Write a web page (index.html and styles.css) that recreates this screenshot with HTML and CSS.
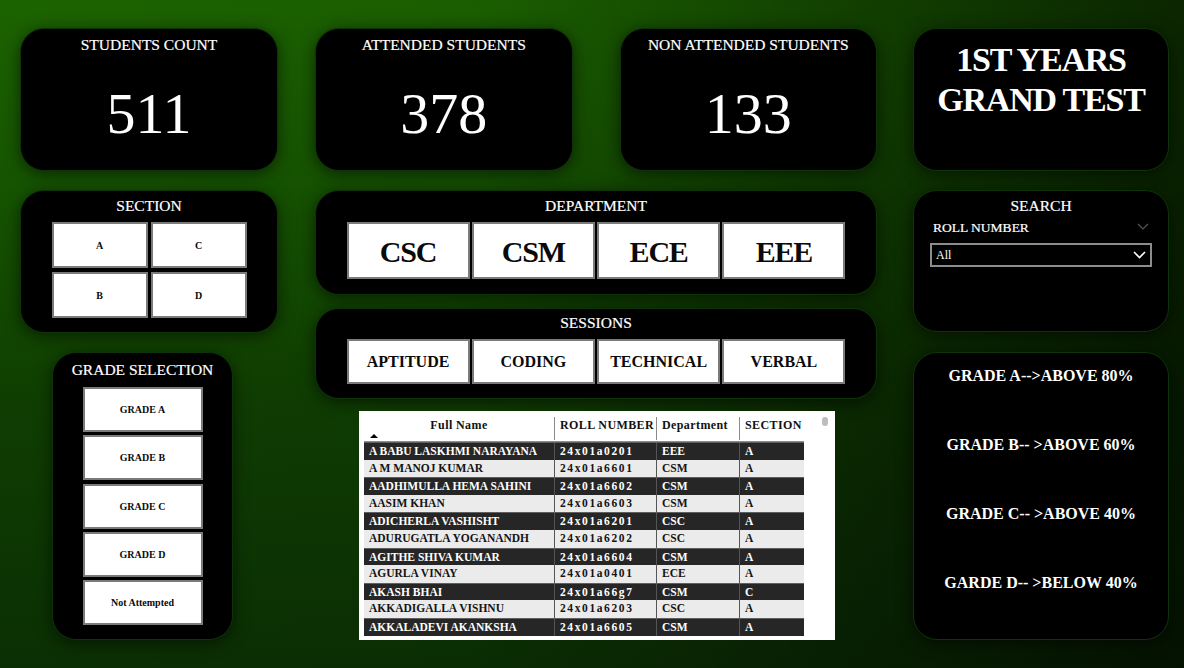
FILE: index.html
```html
<!DOCTYPE html>
<html lang="en">
<head>
<meta charset="utf-8">
<title>1st Years Grand Test</title>
<link rel="stylesheet" href="styles.css">
</head>
<body>
<div class="dash">
  <div class="col col1">
    <div class="card kpi">
      <div class="kpi-label">STUDENTS COUNT</div>
      <div class="kpi-value">511</div>
    </div>
    <div class="card section-card">
      <div class="card-title">SECTION</div>
      <div class="sec-grid">
        <div class="btn btn-sm">A</div>
        <div class="btn btn-sm">C</div>
        <div class="btn btn-sm">B</div>
        <div class="btn btn-sm">D</div>
      </div>
    </div>
    <div class="card grade-card">
      <div class="card-title">GRADE SELECTION</div>
      <div class="grade-list">
        <div class="btn btn-sm">GRADE A</div>
        <div class="btn btn-sm">GRADE B</div>
        <div class="btn btn-sm">GRADE C</div>
        <div class="btn btn-sm">GRADE D</div>
        <div class="btn btn-sm">Not Attempted</div>
      </div>
    </div>
  </div>

  <div class="col col2">
    <div class="kpi-row">
      <div class="card kpi">
        <div class="kpi-label">ATTENDED STUDENTS</div>
        <div class="kpi-value">378</div>
      </div>
      <div class="card kpi">
        <div class="kpi-label">NON ATTENDED STUDENTS</div>
        <div class="kpi-value">133</div>
      </div>
    </div>
    <div class="card dept-card">
      <div class="card-title">DEPARTMENT</div>
      <div class="btn-row dept-row">
        <div class="btn btn-xl">CSC</div>
        <div class="btn btn-xl">CSM</div>
        <div class="btn btn-xl">ECE</div>
        <div class="btn btn-xl">EEE</div>
      </div>
    </div>
    <div class="card sess-card">
      <div class="card-title">SESSIONS</div>
      <div class="btn-row sess-row">
        <div class="btn btn-md">APTITUDE</div>
        <div class="btn btn-md">CODING</div>
        <div class="btn btn-md">TECHNICAL</div>
        <div class="btn btn-md">VERBAL</div>
      </div>
    </div>
    <div class="table-panel">
      <div class="thead">
        <div class="th th-name">Full Name<span class="sort-arrow"></span></div>
        <div class="th">ROLL NUMBER</div>
        <div class="th">Department</div>
        <div class="th">SECTION</div>
      </div>
      <div class="tbody">
        <div class="tr dark"><div class="td">A BABU LASKHMI NARAYANA</div><div class="td roll">24x01a0201</div><div class="td">EEE</div><div class="td">A</div></div>
        <div class="tr light"><div class="td">A M MANOJ KUMAR</div><div class="td roll">24x01a6601</div><div class="td">CSM</div><div class="td">A</div></div>
        <div class="tr dark"><div class="td">AADHIMULLA HEMA SAHINI</div><div class="td roll">24x01a6602</div><div class="td">CSM</div><div class="td">A</div></div>
        <div class="tr light"><div class="td">AASIM KHAN</div><div class="td roll">24x01a6603</div><div class="td">CSM</div><div class="td">A</div></div>
        <div class="tr dark"><div class="td">ADICHERLA VASHISHT</div><div class="td roll">24x01a6201</div><div class="td">CSC</div><div class="td">A</div></div>
        <div class="tr light"><div class="td">ADURUGATLA YOGANANDH</div><div class="td roll">24x01a6202</div><div class="td">CSC</div><div class="td">A</div></div>
        <div class="tr dark"><div class="td">AGITHE SHIVA KUMAR</div><div class="td roll">24x01a6604</div><div class="td">CSM</div><div class="td">A</div></div>
        <div class="tr light"><div class="td">AGURLA VINAY</div><div class="td roll">24x01a0401</div><div class="td">ECE</div><div class="td">A</div></div>
        <div class="tr dark"><div class="td">AKASH BHAI</div><div class="td roll">24x01a66g7</div><div class="td">CSM</div><div class="td">C</div></div>
        <div class="tr light"><div class="td">AKKADIGALLA VISHNU</div><div class="td roll">24x01a6203</div><div class="td">CSC</div><div class="td">A</div></div>
        <div class="tr dark"><div class="td">AKKALADEVI AKANKSHA</div><div class="td roll">24x01a6605</div><div class="td">CSM</div><div class="td">A</div></div>
      </div>
      <div class="scroll-thumb"></div>
    </div>
  </div>

  <div class="col col3">
    <div class="card title-card">
      <div class="big-title">1ST YEARS<br>GRAND TEST</div>
    </div>
    <div class="card search-card">
      <div class="card-title">SEARCH</div>
      <div class="field-row">
        <span class="field-label">ROLL NUMBER</span>
        <svg class="chev-top" width="12" height="7" viewBox="0 0 12 7"><path d="M1 1 L6 6 L11 1" fill="none" stroke="#555" stroke-width="1.2"/></svg>
      </div>
      <div class="dropdown">
        <span class="dd-value">All</span>
        <svg class="chev" width="13" height="8" viewBox="0 0 13 8"><path d="M1 1 L6.5 6.5 L12 1" fill="none" stroke="#fff" stroke-width="1.6"/></svg>
      </div>
    </div>
    <div class="card legend-card">
      <div class="legend-line">GRADE A--&gt;ABOVE 80%</div>
      <div class="legend-line">GRADE B-- &gt;ABOVE 60%</div>
      <div class="legend-line">GRADE C-- &gt;ABOVE 40%</div>
      <div class="legend-line">GARDE D-- &gt;BELOW 40%</div>
    </div>
  </div>
</div>
</body>
</html>
```

FILE: styles.css
```css
* { box-sizing: border-box; margin: 0; padding: 0; }

html, body { width: 1184px; height: 668px; overflow: hidden; }

body {
  font-family: "Liberation Serif", "Times New Roman", serif;
  color: #fff;
  background:
    linear-gradient(90deg, rgba(0,0,0,0) 0%, rgba(0,0,0,0.05) 40%, rgba(0,0,0,0.62) 100%),
    linear-gradient(180deg, #1c6300 0%, #175600 25%, #0f3e02 60%, #0b2f04 100%);
}

.dash { display: flex; padding: 28px 0 0 20px; height: 100%; }

.col { display: flex; flex-direction: column; }
.col1 { width: 258px; }
.col2 { width: 562px; margin-left: 37px; }
.col3 { width: 256px; margin-left: 36px; }

.card {
  background: #000;
  border-radius: 24px;
  border: 1px solid #0f3309;
  box-shadow: 0 3px 16px rgba(0,0,0,0.55);
}

.card-title { font-size: 15.5px; line-height: 18px; text-align: center; -webkit-text-stroke: 0.2px #fff; }

/* KPI cards */
.kpi { height: 143px; display: flex; flex-direction: column; align-items: center; padding-top: 7px; }
.kpi-label { font-size: 15.5px; line-height: 18px; white-space: nowrap; -webkit-text-stroke: 0.2px #fff; }
.kpi-value { font-size: 58px; line-height: 60px; margin-top: 30px; }
.kpi-row { display: flex; gap: 47px; }
.kpi-row .kpi { flex: 1; }

/* buttons */
.btn {
  background: #fff;
  color: #0a0a0a;
  border: 2px solid #7b7b7b;
  font-weight: bold;
  display: flex; align-items: center; justify-content: center;
  white-space: nowrap;
}
.btn-sm { font-size: 10px; }
.btn-md { font-size: 16px; }
.btn-xl { font-size: 30px; letter-spacing: -1.2px; padding-top: 2px; }

/* section */
.section-card { height: 143px; margin-top: 19px; padding-top: 6px; }
.sec-grid {
  display: grid;
  grid-template-columns: 96px 96px;
  grid-auto-rows: 46px;
  column-gap: 3px; row-gap: 4px;
  justify-content: center;
  margin-top: 7px;
}

/* grade selection */
.grade-card { height: 288px; width: 181px; margin-top: 19px; margin-left: 32px; padding-top: 8px; }
.grade-list { display: flex; flex-direction: column; align-items: center; gap: 3.3px; margin-top: 8px; }
.grade-list .btn { width: 120px; height: 45px; }

/* department / sessions */
.dept-card { height: 105px; margin-top: 19px; padding-top: 6px; }
.sess-card { height: 91px; margin-top: 13px; padding-top: 5px; }
.btn-row { display: grid; grid-template-columns: repeat(4, 123px); column-gap: 2.3px; justify-content: center; margin-top: 7px; }
.dept-row { grid-auto-rows: 57px; }
.sess-row { grid-auto-rows: 45px; }

/* table */
.table-panel {
  position: relative;
  width: 476px; height: 229px;
  margin-top: 12px; margin-left: 44px;
  background: #fff;
  padding: 3px 0 0 5px;
}
.thead, .tr { display: grid; grid-template-columns: 190px 102px 83px 65px; width: 440px; }
.thead { height: 28px; border-bottom: 1px solid #7d9a72; }
.th {
  color: #111; font-weight: bold; font-size: 12px; line-height: 14px;
  padding: 4px 0 0 5px; letter-spacing: 0.4px; white-space: nowrap;
}
.th + .th { border-left: 1px solid #8a8a8a; margin-top: 3px; padding-top: 1px; height: 23px; }
.th-name { text-align: center; padding-left: 0; }
.sort-arrow {
  display: block; width: 0; height: 0; margin: 2px 0 0 6px;
  border-left: 4px solid transparent; border-right: 4px solid transparent;
  border-bottom: 4px solid #000;
}
.tr { height: 17.6px; }
.tr.dark { background: #262626; color: #fff; border-top: 1px solid #5f5f5f; }
.tr.light { background: #ebebeb; color: #141414; }
.td {
  font-weight: bold; font-size: 11.5px; line-height: 16.6px;
  padding-left: 5px; white-space: nowrap; overflow: hidden;
}
.td + .td { border-left: 1px solid #555; padding-left: 5px; }
.td.roll { letter-spacing: 1.6px; }
.scroll-thumb {
  position: absolute; right: 7px; top: 6px;
  width: 6px; height: 9px; border-radius: 3px; background: #bdbdbd;
}

/* title */
.title-card { height: 143px; padding-top: 11px; }
.big-title { font-size: 34px; line-height: 40px; font-weight: bold; text-align: center; letter-spacing: -1.2px; }

/* search */
.search-card { height: 142px; margin-top: 19px; padding: 6px 16px 0 16px; }
.field-row { display: flex; justify-content: space-between; align-items: center; margin-top: 5px; height: 16px; padding: 0 3px 0 3px; }
.field-label { font-size: 13.5px; line-height: 16px; -webkit-text-stroke: 0.2px #fff; }
.chev-top { display: block; margin-top: -3px; }
.dropdown {
  margin-top: 7px; height: 24px;
  border: 2px solid #8c8c8c;
  display: flex; align-items: center; justify-content: space-between;
  padding: 0 4px 0 4px;
}
.dd-value { font-size: 12px; line-height: 14px; }
.chev { display: block; }

/* legend */
.legend-card { height: 288px; margin-top: 20px; padding-top: 13px; display: flex; flex-direction: column; gap: 49px; }
.legend-line { font-size: 16px; line-height: 20px; font-weight: bold; text-align: center; white-space: nowrap; }
```
